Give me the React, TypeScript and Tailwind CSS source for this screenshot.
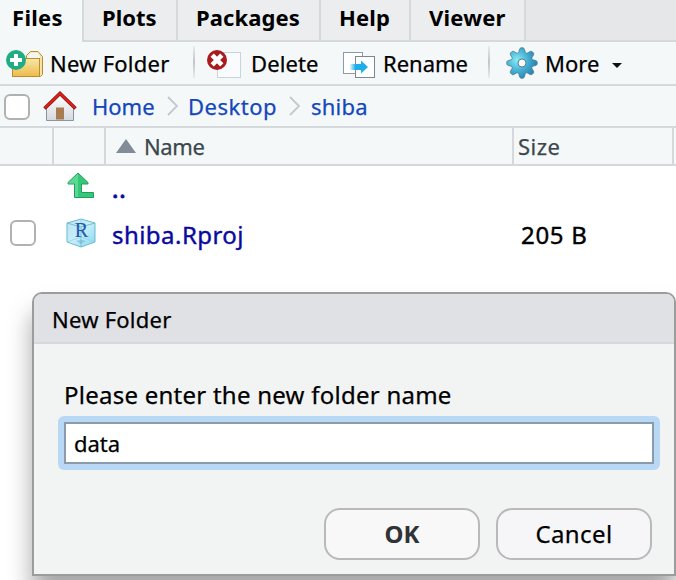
import React from "react";

function NewFolderIcon() {
  return (
    <svg width="38" height="28" viewBox="0 0 38 28" className="block shrink-0">
      <defs>
        <linearGradient id="folder" x1="0" y1="0" x2="0" y2="1">
          <stop offset="0" stopColor="#f6e8a8" />
          <stop offset="1" stopColor="#efba49" />
        </linearGradient>
      </defs>
      <path d="M20.500 9V5.500L24.500 1.500H32L35 5L36.500 6.500V24.500L34.500 26.500H28Z" fill="#f5e3a4" stroke="#b98f2b" />
      <path d="M21.500 8V5.800L24.700 2.500H31.500L34 5.500V8Z" fill="#f4f4f2" />
      <rect x="6.500" y="8.500" width="27" height="18" fill="url(#folder)" stroke="#b98f2b" />
      <circle cx="10" cy="10" r="10" fill="#1fae84" />
      <path d="M8 4h4v4h4v4h-4v4H8v-4H4V8h4Z" fill="#fff" />
    </svg>
  );
}

function DeleteIcon() {
  return (
    <svg width="34" height="28" viewBox="0 0 34 28" className="block shrink-0">
      <rect x="10.500" y="2.500" width="23" height="25" fill="#fafbfc" stroke="#c9d3db" />
      <circle cx="10" cy="10" r="10" fill="#a81c1e" />
      <path d="M5.200 5.200l9.600 9.600m0-9.600l-9.600 9.600" stroke="#fff" strokeWidth="4.600" />
    </svg>
  );
}

function RenameIcon() {
  return (
    <svg width="32" height="26" viewBox="0 0 32 26" className="block shrink-0">
      <defs>
        <linearGradient id="move" x1="0" y1="0" x2="1" y2="0">
          <stop offset="0" stopColor="#20aeea" stopOpacity="0.100" />
          <stop offset="0.300" stopColor="#20aeea" />
        </linearGradient>
      </defs>
      <rect x="0.500" y="0.500" width="19" height="21" fill="#fff" stroke="#9099a6" />
      <rect x="12.500" y="4.500" width="19" height="21" fill="#fff" stroke="#7c8795" />
      <path d="M7 12H18V8.500L25 15L18 21.500V18H7Z" fill="url(#move)" />
    </svg>
  );
}

// Eight rounded teeth: the radius swings between the root and the tip of each tooth.
const GEAR_OUTLINE =
  Array.from({ length: 240 }, (_, i) => {
    const a = (i / 240) * Math.PI * 2;
    const r = 12.9 + 2.3 * Math.tanh(1.4 * (Math.cos(8 * a) + 0.15)) / Math.tanh(1.5);
    return `${i ? "L" : "M"}${(16 + r * Math.cos(a)).toFixed(2)} ${(16 + r * Math.sin(a)).toFixed(2)}`;
  }).join("") + "Z";

function GearIcon() {
  return (
    <svg width="32" height="32" viewBox="0 0 32 32" className="block shrink-0">
      <defs>
        <radialGradient id="gear" gradientUnits="userSpaceOnUse" cx="11" cy="13" r="19">
          <stop offset="0" stopColor="#86ecf6" />
          <stop offset="0.600" stopColor="#45add1" />
          <stop offset="1" stopColor="#2b87b5" />
        </radialGradient>
      </defs>
      <path d={GEAR_OUTLINE} fill="url(#gear)" stroke="#4a7c8f" strokeWidth="0.900" />
      <circle cx="16" cy="16" r="4" fill="#fafafa" stroke="#587f8d" strokeWidth="1" />
    </svg>
  );
}

function HomeIcon() {
  return (
    <svg width="34" height="31" viewBox="0 0 34 31" className="block shrink-0">
      <defs>
        <linearGradient id="wall" x1="0" y1="0" x2="0" y2="1">
          <stop offset="0" stopColor="#fff" />
          <stop offset="1" stopColor="#d5d8df" />
        </linearGradient>
      </defs>
      <path d="M3.500 16L17 3L30.500 16V29.500H3.500Z" fill="url(#wall)" stroke="#8797a0" />
      <rect x="13" y="16.500" width="8" height="12" fill="#a97c50" />
      <path d="M1.500 17.500L17 2.500L32.500 17.500" fill="none" stroke="#8d1510" strokeWidth="3.600" />
      <path d="M2 17L17 2.500L32 17" fill="none" stroke="#dd2118" strokeWidth="2.200" />
    </svg>
  );
}

function UpIcon() {
  return (
    <svg width="28" height="28" viewBox="0 0 28 28" className="block">
      <path d="M11 1L21 10.500V12H14.500V20.500H26.500V25.500H7.500V12H1V10.500Z" fill="#35c878" stroke="#229e5c" />
      <path d="M11 1.700V25H8V11.500H1.500V10.700Z" fill="#5bd894" />
    </svg>
  );
}

function ProjectIcon() {
  return (
    <svg width="30" height="30" viewBox="0 0 30 30" className="block">
      <defs>
        <linearGradient id="cube" x1="0" y1="0" x2="1" y2="1">
          <stop offset="0" stopColor="#b9e3f5" />
          <stop offset="0.500" stopColor="#c8eefa" />
          <stop offset="1" stopColor="#86d6f2" />
        </linearGradient>
      </defs>
      <path d="M1 5L15 1L29 5V24L15 29L1 24Z" fill="url(#cube)" stroke="#69bdcd" />
      <path d="M1 5L15 9L29 5M15 9V29" fill="none" stroke="#6fc2d2" />
      <path d="M15 1V20M1 24L15 19L29 24" fill="none" stroke="#8ed1e2" strokeWidth="0.700" />
      <path d="M10 23Q15 21 20 23L15 26Z" fill="#78b6d0" opacity="0.600" />
      <text x="15.500" y="19" textAnchor="middle" className="font-['Liberation_Serif',serif] text-[20px]" fill="#2459ac" stroke="#2459ac" strokeWidth="0.200">R</text>
    </svg>
  );
}

function Checkbox() {
  return <div className="size-[26px] shrink-0 rounded-md border-2 border-[#b1b1b1] bg-white" />;
}

function Chevron() {
  return (
    <svg width="12" height="20" viewBox="0 0 12 20" className="block shrink-0">
      <path d="M1 1L10 10L1 19" fill="none" stroke="#c4c9d0" strokeWidth="1.800" />
    </svg>
  );
}

function Separator({ className }: { className: string }) {
  return <div className={`h-8 w-0.5 shrink-0 bg-linear-to-b from-[#e9ecee] via-[#c2c5c9] to-[#e9ecee] ${className}`} />;
}

export default function App() {
  return (
    <div className="relative h-[580px] w-[676px] overflow-hidden bg-white font-['Noto_Sans',sans-serif] text-[22px] leading-[30px] whitespace-nowrap text-black [-webkit-text-stroke:0.25px]">
      <nav className="flex h-[42px] bg-[#e6e7e9] font-bold [-webkit-text-stroke:0px]">
        <div className="w-[82px] bg-[#f4f8f9] pt-0.5 pl-3 tracking-[0.300px]">Files</div>
        <div className="w-24 border-x-2 border-b-2 border-[#d5d9dc] bg-[#ebedef] pt-0.5 pl-[18px]">Plots</div>
        <div className="w-[143px] border-r-2 border-b-2 border-[#d5d9dc] bg-[#ebedef] pt-0.5 pl-[18px] tracking-[0.100px]">Packages</div>
        <div className="w-[90px] border-r-2 border-b-2 border-[#d5d9dc] bg-[#ebedef] pt-0.5 pl-[18px] tracking-[0.200px]">Help</div>
        <div className="w-[115px] border-r-2 border-b-2 border-[#d5d9dc] bg-[#ebedef] pt-0.5 pl-[18px] tracking-[0.200px]">Viewer</div>
        <div className="grow border-b-2 border-[#d5d9dc]" />
      </nav>

      <div className="flex h-11 items-center border-b-2 border-[#d5d9dc] bg-[#f4f8f9]">
        <div className="flex w-[193px] items-center pl-1.5">
          <span className="mt-0.5"><NewFolderIcon /></span>
          <span className="ml-1.5 tracking-[0.240px]">New Folder</span>
        </div>
        <Separator className="mb-0.5" />
        <div className="flex w-[148px] items-center pl-3">
          <span className="mt-0.5"><DeleteIcon /></span>
          <span className="ml-2.5 tracking-[0.100px]">Delete</span>
        </div>
        <div className="flex w-[133px] items-center">
          <span className="mt-[3px]"><RenameIcon /></span>
          <span className="ml-2">Rename</span>
        </div>
        <Separator className="mb-0.5 ml-3" />
        <div className="flex items-center pl-4">
          <GearIcon />
          <span className="ml-[7px]">More</span>
          <svg width="10" height="5" viewBox="0 0 10 5" className="mt-1 ml-[13px] block"><path d="M0 0H10L5 5Z" fill="#111" /></svg>
        </div>
      </div>

      <div className="flex h-[42px] items-center border-b-2 border-[#d5d9dc] bg-[#f4f8f9] pl-1 text-[#1447bd]">
        <span className="mt-0.5"><Checkbox /></span>
        <span className="ml-[13px]"><HomeIcon /></span>
        <span className="ml-[15px] w-[75px]">Home</span>
        <Chevron />
        <span className="ml-[9px] w-[101px] tracking-[0.500px]">Desktop</span>
        <Chevron />
        <span className="ml-2.5 tracking-[0.200px]">shiba</span>
      </div>

      <div className="flex h-[38px] border-b-2 border-[#d5d9dc] bg-[#f4f8f9] text-[#3c474d]">
        <div className="w-[54px] border-r-2 border-[#d5d9dc]" />
        <div className="w-[52px] border-r-2 border-[#d5d9dc]" />
        <div className="flex w-[408px] items-center border-r-2 border-[#d5d9dc] pl-2.5">
          <svg width="20" height="14" viewBox="0 0 20 14" className="block"><path d="M10 0L20 14H0Z" fill="#828b98" /></svg>
          <span className="ml-2 tracking-[-0.400px]">Name</span>
        </div>
        <div className="w-40 border-r-2 border-[#d5d9dc] pt-[3px] pl-1 tracking-[0.500px]">Size</div>
      </div>

      <div className="flex h-[46px] pl-[67px] text-[24px] text-[#0a0aa0]">
        <div className="w-[45px] pt-1.5"><UpIcon /></div>
        <span className="pt-2 tracking-[0.900px] [-webkit-text-stroke:0.9px]">..</span>
      </div>
      <div className="flex h-[46px] items-center pl-2.5 text-[24px]">
        <span className="-mt-1"><Checkbox /></span>
        <div className="-mt-1 ml-[30px] w-[46px]"><ProjectIcon /></div>
        <span className="w-[409px] tracking-[0.450px] text-[#0a0aa0] [-webkit-text-stroke:0.4px]">shiba.Rproj</span>
        <span className="tracking-[0.700px] [-webkit-text-stroke:0.4px]">205 B</span>
      </div>

      <section className="absolute top-[292px] left-8 h-[284px] w-[644px] rounded-t-[10px] border-2 border-[#9b9d9d] bg-[#f2f4f3] shadow-[0_20px_24px_rgba(0,0,0,0.350)]">
        <header className="h-[50px] rounded-t-lg border-b-2 border-[#d6d8dd] bg-[#e0e1e5] pt-2.5 pl-[18px] tracking-[0.240px]">New Folder</header>
        <div className="px-6 pt-9">
          <label className="block pl-1.5 text-[24px] tracking-[0.250px]">Please enter the new folder name</label>
          <div className="mt-1.5 h-[54px] w-[602px] rounded-md bg-[#b9d8f5] p-1.5">
            <div className="flex h-[42px] items-center border-2 border-[#8a9cac] bg-white pb-px pl-2">data</div>
          </div>
        </div>
        <div className="mt-[38px] flex gap-4 pl-[290px] text-[24px]">
          <button className="h-[52px] w-[156px] rounded-2xl border-2 border-[#b9b9b9] bg-[#f8f8f8] font-bold text-[#303234] [-webkit-text-stroke:0px]">OK</button>
          <button className="h-[52px] w-[156px] rounded-2xl border-2 border-[#b9b9b9] bg-[#f6f6f9] tracking-[0.400px]">Cancel</button>
        </div>
      </section>
    </div>
  );
}
